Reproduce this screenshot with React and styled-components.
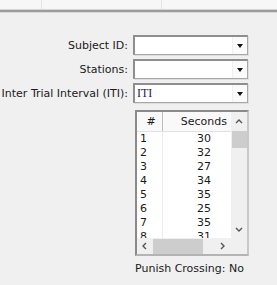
import React from "react";
import styled, { createGlobalStyle } from "styled-components";

const GlobalStyle = createGlobalStyle`
  html, body {
    margin: 0;
    padding: 0;
    background: #f0f0f0;
  }
`;

const Page = styled.div`
  width: 277px;
  height: 285px;
  overflow: hidden;
  background: #f0f0f0;
  font-family: "DejaVu Sans", "Liberation Sans", sans-serif;
  font-size: 11px;
  color: #1a1a1a;
  display: flex;
  flex-direction: column;
`;

const TopStrip = styled.div`
  height: 9px;
  display: flex;
  background: #f7f7f7;
`;

const TopCell = styled.div`
  width: ${(p) => p.w}px;
  border-right: 1px solid #e4e4e4;
`;

const Divider = styled.div`
  height: 2px;
  background: #9c9c9c;
  border-top: 1px solid #d6d6d6;
  border-bottom: 1px solid #d9d9d9;
`;

const Form = styled.div`
  display: grid;
  grid-template-columns: 128px 115px;
  grid-template-rows: 20px 20px 20px auto auto;
  column-gap: 5px;
  row-gap: 4px;
  padding-top: 22px;
`;

const Label = styled.div`
  text-align: right;
  align-self: center;
  white-space: nowrap;
`;

const Combo = styled.div`
  display: flex;
  align-items: stretch;
  background: #fff;
  border-top: 2px solid #8e8e8e;
  border-left: 2px solid #8e8e8e;
  border-right: 1px solid #a8a8a8;
  border-bottom: 1px solid #a8a8a8;
  box-shadow: 1px 1px 0 #dedede;
`;

const ComboText = styled.div`
  flex: 1;
  font-family: "Liberation Serif", serif;
  font-size: 12px;
  line-height: 17px;
  padding-left: 2px;
  color: #1a1a60;
`;

const DropButton = styled.div`
  width: 14px;
  display: flex;
  align-items: center;
  justify-content: center;
  background: #fafafa;
  border-left: 1px solid #f0f0f0;

  &::after {
    content: "";
    border-left: 3.5px solid transparent;
    border-right: 3.5px solid transparent;
    border-top: 4px solid #111;
    margin-top: 1px;
  }
`;

const TableWrap = styled.div`
  grid-column: 2;
  grid-row: 4;
  margin-left: 2px;
  margin-top: 3px;
  width: 114px;
  height: 146px;
  box-sizing: border-box;
  border-top: 2px solid #8a8a8a;
  border-left: 2px solid #8a8a8a;
  border-right: 2px solid #c8c8c8;
  border-bottom: 2px solid #b4b4b4;
  background: #f0f0f0;
  display: grid;
  grid-template-columns: 1fr 16px;
  grid-template-rows: 1fr 16px;
  overflow: hidden;
`;

const List = styled.div`
  background: #fff;
  overflow: hidden;
  display: flex;
  flex-direction: column;
  min-height: 0;
`;

const Row = styled.div`
  display: grid;
  grid-template-columns: 26px 1fr;
  height: ${(p) => (p.head ? 19 : 14)}px;
  flex-shrink: 0;
  background: ${(p) => (p.head ? "#f9f9f9" : "#fff")};
  border-bottom: ${(p) => (p.head ? "1px solid #e2e2e2" : "none")};
`;

const Cell = styled.div`
  line-height: ${(p) => (p.head ? 19 : 14)}px;
  padding: ${(p) => (p.num ? "0 0 0 3px" : p.head ? "0 4px 0 0" : "0 20px 0 0")};
  text-align: ${(p) => (p.num ? (p.head ? "center" : "left") : "right")};
  border-right: ${(p) =>
    p.num ? `1px solid ${p.head ? "#bdbdbd" : "#ececec"}` : "none"};
`;

const VScroll = styled.div`
  display: flex;
  flex-direction: column;
  align-items: center;
  background: #f0f0f0;
  min-height: 0;
`;

const Arrow = styled.div`
  height: ${(p) => p.h || 16}px;
  width: 16px;
  flex-shrink: 0;
  display: flex;
  align-items: center;
  justify-content: center;
`;

const VThumb = styled.div`
  width: 15px;
  height: 17px;
  background: #cdcdcd;
`;

const Spacer = styled.div`
  flex: 1;
`;

const HScroll = styled.div`
  display: flex;
  align-items: center;
  background: #f0f0f0;
`;

const HThumb = styled.div`
  width: 50px;
  height: 15px;
  background: #cdcdcd;
`;

const Corner = styled.div`
  background: #f0f0f0;
`;

const Note = styled.div`
  grid-column: 2;
  grid-row: 5;
  margin-top: 2px;
  margin-left: 2px;
  white-space: nowrap;
`;

const Chevron = ({ dir }) => {
  const paths = {
    up: "M1 5 L4 2 L7 5",
    down: "M1 2 L4 5 L7 2",
    left: "M5 1 L2 4 L5 7",
    right: "M2 1 L5 4 L2 7",
  };
  return (
    <svg width="8" height="8" viewBox="0 0 8 8">
      <path d={paths[dir]} fill="none" stroke="#555" strokeWidth="1.4" />
    </svg>
  );
};

const rows = [
  [1, 30],
  [2, 32],
  [3, 27],
  [4, 34],
  [5, 35],
  [6, 25],
  [7, 35],
  [8, 31],
];

export default function App() {
  return (
    <Page>
      <GlobalStyle />
      <TopStrip>
        <TopCell w={41} />
        <TopCell w={119} />
      </TopStrip>
      <Divider />
      <Form>
        <Label>Subject ID:</Label>
        <Combo>
          <ComboText />
          <DropButton />
        </Combo>
        <Label>Stations:</Label>
        <Combo>
          <ComboText />
          <DropButton />
        </Combo>
        <Label>Inter Trial Interval (ITI):</Label>
        <Combo>
          <ComboText>ITI</ComboText>
          <DropButton />
        </Combo>
        <TableWrap>
          <List>
            <Row head>
              <Cell head num>#</Cell>
              <Cell head>Seconds</Cell>
            </Row>
            {rows.map(([n, s]) => (
              <Row key={n}>
                <Cell num>{n}</Cell>
                <Cell>{s}</Cell>
              </Row>
            ))}
          </List>
          <VScroll>
            <Arrow h={19}>
              <Chevron dir="up" />
            </Arrow>
            <VThumb />
            <Spacer />
            <Arrow>
              <Chevron dir="down" />
            </Arrow>
          </VScroll>
          <HScroll>
            <Arrow>
              <Chevron dir="left" />
            </Arrow>
            <HThumb />
            <Spacer />
            <Arrow>
              <Chevron dir="right" />
            </Arrow>
          </HScroll>
          <Corner />
        </TableWrap>
        <Note>Punish Crossing: No</Note>
      </Form>
    </Page>
  );
}
